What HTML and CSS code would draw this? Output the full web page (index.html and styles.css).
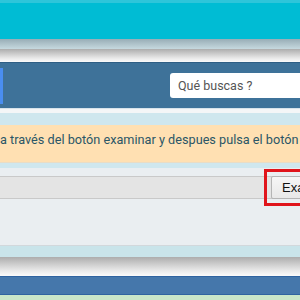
FILE: index.html
```html
<!DOCTYPE html>
<html lang="es">
<head>
    <meta charset="UTF-8">
    <meta name="viewport" content="width=device-width, initial-scale=1.0">
    <title>Subir archivo</title>
    <link rel="stylesheet" href="styles.css">
</head>
<body>

<header class="topbar"></header>
<div class="shade-blue"></div>
<div class="shade-grey"></div>

<nav class="navbar">
    <button class="nav-button"></button>
    <input class="search" type="text" placeholder="Qué buscas ?">
</nav>

<div class="gap-white"></div>
<div class="gap-cyan"></div>

<main>
    <!-- aviso -->
    <div class="alert">a través del botón examinar y despues pulsa el botón "Subir"</div>

    <div class="gap-cyan small"></div>

    <!-- selector de archivo -->
    <div class="file-row">
        <div class="file-name"></div>
        <span class="mark">
            <button class="browse">Examinar...</button>
        </span>
    </div>

    <div class="panel"></div>
</main>

<div class="gap-cyan bottom"></div>
<div class="shade-grey footer-shade"></div>
<footer class="footer"></footer>
<div class="green-strip"></div>

</body>
</html>
```

FILE: styles.css
```css
body {
    margin: 0;
    font-family: Roboto, 'Liberation Sans', sans-serif;
    background-color: #eaeef1;
    overflow: hidden;
    width: 300px;
    height: 300px;
}

.topbar {
    height: 36px;
    background-color: #00bcd4;
    border-top: 3px solid #2ec5da;
}

.shade-blue {
    height: 10px;
    background: linear-gradient(#98adb6, #c6d9df);
}

.shade-grey {
    height: 13px;
    background: linear-gradient(#adadad, #e8e8e8 70%, #fbfbfb);
}

.navbar {
    height: 45px;
    background-color: #3e7299;
    border-top: 1px solid #2f5f85;
    display: flex;
    align-items: center;
}

.nav-button {
    width: 3px;
    height: 36px;
    padding: 0;
    border: none;
    background-color: #4a8ef0;
}

.search {
    margin-left: auto;
    margin-right: -40px;
    width: 170px;
    height: 25px;
    box-sizing: border-box;
    border: none;
    border-radius: 3px;
    padding: 0 8px;
    font-family: Roboto, 'Liberation Sans', sans-serif;
    font-size: 12.5px;
    background-color: white;
}

.search::placeholder {
    color: #555;
}

.gap-white {
    height: 4px;
    background-color: #f4f6f7;
    border-top: 1px solid #d7e3ea;
}

.gap-cyan {
    height: 12px;
    background-color: #cfe7ee;
}

.gap-cyan.small {
    height: 5px;
}

.alert {
    height: 37px;
    line-height: 29px;
    background-color: #ffe0b2;
    color: #2a5667;
    font-size: 12.7px;
    white-space: nowrap;
    overflow: hidden;
    border-bottom: 1px solid #e9dcc5;
}

.file-row {
    display: flex;
    align-items: center;
    margin-top: 8px;
    height: 21px;
    background-color: #e4e4e4;
    border-top: 1px solid #c9c9c9;
    border-bottom: 1px solid #c9c9c9;
}

.file-name {
    flex: 1;
}

.mark {
    outline: 3px solid #e0141b;
    outline-offset: 4px;
    margin-right: -40px;
}

.browse {
    display: block;
    width: 69px;
    height: 23px;
    border: 1px solid #b5b5b5;
    border-radius: 2px;
    background: linear-gradient(#f6f6f6, #e8e8e8);
    font-family: 'Liberation Sans', sans-serif;
    font-size: 13px;
    color: #111;
    text-align: left;
    padding: 0 10px;
}

.panel {
    height: 46px;
}

.gap-cyan.bottom {
    height: 11px;
    background-color: #c9e4ea;
    border-top: 1px solid #d2d8dc;
}

.footer-shade {
    height: 19px;
}

.footer {
    height: 17px;
    background-color: #4577ab;
    border-top: 1px solid #2f63a0;
    border-bottom: 1px solid #2f63a0;
}

.green-strip {
    height: 6px;
    background-color: #c8e6c9;
}
```
